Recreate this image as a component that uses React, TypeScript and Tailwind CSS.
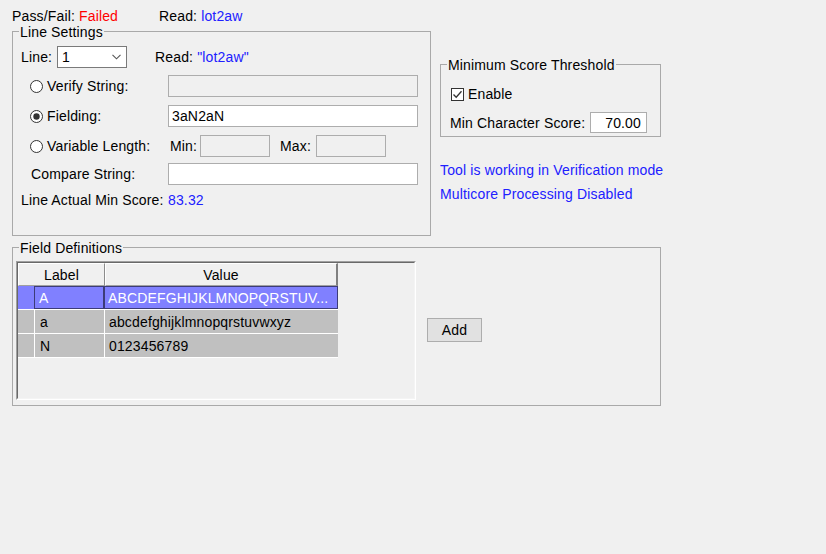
import type { ReactNode } from "react";

function Group({
	title,
	className,
	children,
}: {
	title: string;
	className: string;
	children: ReactNode;
}) {
	return (
		<div className={`relative border border-[#a9a9a9] ${className}`}>
			<span className="absolute left-[6px] -top-[8px] bg-[#f0f0f0] px-[1px] leading-[16px]">
				{title}
			</span>
			{children}
		</div>
	);
}

function Radio({ checked }: { checked?: boolean }) {
	return (
		<svg width="13" height="13" viewBox="0 0 13 13" className="shrink-0">
			<circle cx="6.5" cy="6.5" r="6" fill="#fff" stroke="#333" strokeWidth="1" />
			{checked && <circle cx="6.5" cy="6.5" r="3.2" fill="#333" />}
		</svg>
	);
}

function Field({
	w,
	disabled,
	value,
	right,
	h = "h-[22px]",
}: {
	w: string;
	disabled?: boolean;
	value?: string;
	right?: boolean;
	h?: string;
}) {
	return (
		<div
			className={`${w} ${h} border border-[#adadad] flex items-center ${
				disabled ? "bg-[#f0f0f0]" : "bg-white"
			} ${right ? "justify-end pr-[5px]" : "pl-[3px]"}`}
		>
			{value}
		</div>
	);
}

const rows = [
	{ label: "A", value: "ABCDEFGHIJKLMNOPQRSTUV...", selected: true },
	{ label: "a", value: "abcdefghijklmnopqrstuvwxyz" },
	{ label: "N", value: "0123456789" },
];

export default function App() {
	return (
		<div className="w-[826px] h-[554px] overflow-hidden bg-[#f0f0f0] text-black text-[14px] leading-[16px] tracking-[0.15px] font-['Liberation_Sans',Arial,sans-serif] pt-[8px] pl-[12px]">
			<div className="flex h-[16px]">
				<span className="w-[147px]">
					Pass/Fail: <span className="text-[#ff0000]">Failed</span>
				</span>
				<span>
					Read: <span className="text-[#2020ff]">lot2aw</span>
				</span>
			</div>

			<div className="flex items-start mt-[7px]">
				<Group title="Line Settings" className="w-[419px] h-[205px] pt-[14px]">
					<div className="flex items-center h-[22px] pl-[8px]">
						<span className="w-[36px]">Line:</span>
						<div className="w-[70px] h-[22px] bg-white border border-[#7a7a7a] flex items-center justify-between pl-[4px] pr-[5px]">
							<span>1</span>
							<svg width="9" height="6" viewBox="0 0 9 6">
								<polyline
									points="0.5,0.8 4.5,4.8 8.5,0.8"
									fill="none"
									stroke="#555"
									strokeWidth="1.1"
								/>
							</svg>
						</div>
						<span className="ml-[28px]">
							Read: <span className="text-[#2020ff]">"lot2aw"</span>
						</span>
					</div>

					<div className="flex items-center h-[22px] mt-[7px]">
						<div className="w-[155px] flex items-center gap-[4px] pl-[17px]">
							<Radio />
							<span>Verify String:</span>
						</div>
						<Field w="w-[250px]" disabled />
					</div>

					<div className="flex items-center h-[22px] mt-[8px]">
						<div className="w-[155px] flex items-center gap-[4px] pl-[17px]">
							<Radio checked />
							<span>Fielding:</span>
						</div>
						<Field w="w-[250px]" value="3aN2aN" />
					</div>

					<div className="flex items-center h-[22px] mt-[8px]">
						<div className="w-[155px] flex items-center gap-[4px] pl-[17px]">
							<Radio />
							<span>Variable Length:</span>
						</div>
						<span className="ml-[2px] w-[30px]">Min:</span>
						<Field w="w-[70px]" disabled />
						<span className="ml-[10px] w-[36px]">Max:</span>
						<Field w="w-[70px]" disabled />
					</div>

					<div className="flex items-center h-[22px] mt-[6px]">
						<span className="w-[155px] pl-[18px]">Compare String:</span>
						<Field w="w-[250px]" />
					</div>

					<div className="flex items-center h-[22px] mt-[4px]">
						<span className="w-[155px] pl-[8px]">Line Actual Min Score:</span>
						<span className="text-[#2020ff]">83.32</span>
					</div>
				</Group>

				<div className="ml-[9px] mt-[33px]">
					<Group title="Minimum Score Threshold" className="w-[221px] h-[73px] pt-[21px]">
						<div className="flex items-center h-[16px] pl-[10px] gap-[4px]">
							<svg width="13" height="13" viewBox="0 0 13 13" className="shrink-0">
								<rect x="0.5" y="0.5" width="12" height="12" fill="#fff" stroke="#333" />
								<polyline
									points="2.5,6.5 5.2,9.3 10.5,3.3"
									fill="none"
									stroke="#333"
									strokeWidth="1.3"
								/>
							</svg>
							<span>Enable</span>
						</div>
						<div className="flex items-center h-[21px] pl-[9px] mt-[10px]">
							<span className="w-[140px]">Min Character Score:</span>
							<Field w="w-[57px]" h="h-[21px]" value="70.00" right />
						</div>
					</Group>
					<div className="text-[#2020ff] mt-[25px] whitespace-nowrap">
						Tool is working in Verification mode
					</div>
					<div className="text-[#2020ff] mt-[8px] whitespace-nowrap">
						Multicore Processing Disabled
					</div>
				</div>
			</div>

			<Group title="Field Definitions" className="w-[649px] h-[159px] mt-[11px]">
				<div className="flex items-start pt-[13px] pl-[3px]">
					<div className="w-[400px] h-[139px] border border-t-[#a0a0a0] border-l-[#a0a0a0] border-r-white border-b-white">
						<div className="w-full h-full border border-t-[#696969] border-l-[#696969] border-r-[#f4f4f4] border-b-[#f4f4f4]">
							<div className="flex h-[23px]">
								<div className="w-[87px] flex items-center justify-center border border-t-white border-l-white border-r-[#8c8c8c] border-b-[#a0a0a0]">
									Label
								</div>
								<div className="w-[233px] flex items-center justify-center border border-t-white border-l-white border-r-[#808080] border-r-2 border-b-[#a0a0a0]">
									Value
								</div>
							</div>
							{rows.map((r) =>
								r.selected ? (
									<div
										key={r.label}
										className="flex w-[320px] h-[24px] bg-[#8080ff] text-white border-b border-white"
									>
										<div className="w-[16px]" />
										<div className="w-[70px] pl-[4px] flex items-center border border-[#3c3c78]">
											{r.label}
										</div>
										<div className="w-[234px] pl-[3px] flex items-center border border-[#3c3c78] whitespace-nowrap overflow-hidden">
											{r.value}
										</div>
									</div>
								) : (
									<div
										key={r.label}
										className="flex w-[320px] h-[24px] bg-[#c0c0c0] border-b border-white"
									>
										<div className="w-[16px]" />
										<div className="w-[70px] pl-[5px] flex items-center border-l border-white">
											{r.label}
										</div>
										<div className="w-[234px] pl-[4px] flex items-center border-l border-white whitespace-nowrap">
											{r.value}
										</div>
									</div>
								),
							)}
						</div>
					</div>
					<button
						type="button"
						className="ml-[11px] mt-[57px] w-[55px] h-[24px] bg-[#e1e1e1] border border-[#adadad] flex items-center justify-center leading-[16px]"
					>
						Add
					</button>
				</div>
			</Group>
		</div>
	);
}
